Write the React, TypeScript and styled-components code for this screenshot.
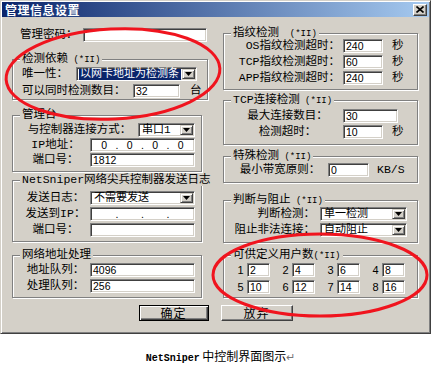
import React from "react";
import styled, { createGlobalStyle } from "styled-components";

const GlobalStyle = createGlobalStyle`
  html, body {
    margin: 0;
    padding: 0;
    background: #ffffff;
  }
  body {
    font-family: "Liberation Mono", "Noto Sans CJK SC", monospace;
    font-size: 11.5px;
    color: #000;
  }
  * {
    box-sizing: border-box;
  }
`;

const Page = styled.div`
  position: relative;
  width: 434px;
  height: 367px;
  overflow: hidden;
`;

const Window = styled.div`
  width: 431px;
  height: 334px;
  background: #d4d0c8;
  border: 1px solid;
  border-color: #d4d0c8 #404040 #404040 #d4d0c8;
  box-shadow: inset 1px 1px 0 #fff, inset -1px -1px 0 #808080;
  padding: 1px;
  display: flex;
  flex-direction: column;
`;

const TitleBar = styled.div`
  height: 15px;
  flex: none;
  display: flex;
  align-items: center;
  justify-content: space-between;
  padding: 0 2px 0 3px;
  background: linear-gradient(to right, #0a246a, #a6caf0);
`;

const TitleText = styled.span`
  color: #fff;
  font-family: "Noto Sans CJK SC", sans-serif;
  font-weight: 700;
  font-size: 12px;
  letter-spacing: 0.5px;
  line-height: 15px;
`;

const CloseBtn = styled.div`
  width: 14px;
  height: 12px;
  background: #d4d0c8;
  border: 1px solid;
  border-color: #fff #404040 #404040 #fff;
  box-shadow: inset -1px -1px 0 #808080;
  display: flex;
  align-items: center;
  justify-content: center;
`;

const Body = styled.div`
  display: flex;
  gap: 15px;
  padding-left: 10px;
`;

const Column = styled.div<{ $w: number }>`
  width: ${(p) => p.$w}px;
  display: flex;
  flex-direction: column;
  align-items: flex-start;
`;

const Group = styled.div<{ $mt: number; $w: number; $pl: number; $pb: number }>`
  width: ${(p) => p.$w}px;
  margin-top: ${(p) => p.$mt}px;
  border: 1px solid #808080;
  box-shadow: inset 1px 1px 0 #fff, 1px 1px 0 #fff;
  padding: 0 0 ${(p) => p.$pb}px ${(p) => p.$pl}px;
  display: flex;
  flex-direction: column;
  align-items: flex-start;
`;

const Caption = styled.div<{ $ml: number }>`
  margin: -7px 0 0 ${(p) => p.$ml}px;
  padding: 0 2px;
  height: 12px;
  line-height: 12px;
  background: #d4d0c8;
  white-space: pre;
`;

const Tag = styled.span`
  font-size: 9px;
`;

const Row = styled.div<{ $mt?: number; $pl?: number }>`
  display: flex;
  align-items: center;
  height: 14px;
  line-height: 14px;
  margin-top: ${(p) => p.$mt ?? 0}px;
  padding-left: ${(p) => p.$pl ?? 0}px;
  white-space: nowrap;
`;

const Label = styled.span<{ $w: number; $align?: string; $pr?: number; $pl?: number }>`
  flex: none;
  width: ${(p) => p.$w}px;
  text-align: ${(p) => p.$align ?? "center"};
  padding-right: ${(p) => p.$pr ?? 0}px;
  padding-left: ${(p) => p.$pl ?? 0}px;
  white-space: pre;
`;

const Unit = styled.span<{ $ml: number }>`
  margin-left: ${(p) => p.$ml}px;
`;

const Field = styled.div<{ $w: number }>`
  flex: none;
  width: ${(p) => p.$w}px;
  height: 14px;
  background: #fff;
  border: 1px solid;
  border-color: #808080 #fff #fff #808080;
  box-shadow: inset 1px 1px 0 #404040, inset -1px -1px 0 #d4d0c8;
  padding: 0 2px 0 2px;
  font-family: "Liberation Sans", Arial, sans-serif;
  font-size: 10.5px;
  line-height: 12px;
  overflow: hidden;
  white-space: nowrap;
`;

const IpField = styled(Field)`
  display: flex;
  padding: 0 2px;
`;

const IpSeg = styled.span`
  flex: 1;
  text-align: center;
`;

const IpDot = styled.span`
  flex: none;
  width: 3px;
  text-align: center;
`;

const SelectBox = styled(Field)`
  display: flex;
  align-items: center;
  padding: 0 1px 0 2px;
  overflow: visible;
  font-family: "Liberation Mono", "Noto Sans CJK SC", monospace;
  font-size: 11px;
`;

const SelectText = styled.span<{ $sel?: boolean }>`
  flex: 1;
  min-width: 0;
  overflow-x: clip;
  overflow-y: visible;
  white-space: nowrap;
  line-height: 11px;
  padding-left: 1px;
  background: ${(p) => (p.$sel ? "#0a246a" : "transparent")};
  color: ${(p) => (p.$sel ? "#fff" : "#000")};
`;

const DropBtn = styled.span`
  flex: none;
  width: 13px;
  height: 10px;
  margin-left: 1px;
  background: #d4d0c8;
  border: 1px solid;
  border-color: #d4d0c8 #404040 #404040 #d4d0c8;
  box-shadow: inset 1px 1px 0 #fff, inset -1px -1px 0 #808080;
  display: flex;
  align-items: center;
  justify-content: center;
`;

const Cell = styled.div`
  display: flex;
  align-items: center;
  margin-right: 9px;
`;

const Num = styled.span`
  width: 13px;
  text-align: center;
  font-family: "Liberation Sans", Arial, sans-serif;
  font-size: 11px;
`;

const Footer = styled.div`
  display: flex;
  justify-content: center;
  gap: 12px;
  margin-top: 7px;
`;

const Btn = styled.div<{ $w: number; $def?: boolean }>`
  width: ${(p) => p.$w}px;
  height: 16px;
  background: #d4d0c8;
  border: 1px solid;
  border-color: ${(p) => (p.$def ? "#000" : "#fff #404040 #404040 #fff")};
  box-shadow: ${(p) =>
    p.$def
      ? "inset 1px 1px 0 #fff, inset -1px -1px 0 #404040, inset -2px -2px 0 #808080"
      : "inset -1px -1px 0 #808080"};
  font-family: "Noto Sans CJK SC", sans-serif;
  font-size: 12px;
  letter-spacing: 1px;
  line-height: 14px;
  text-align: center;
`;

const Note = styled.div`
  margin-top: 15px;
  padding-left: 7px;
  text-align: center;
  line-height: 14px;
  font-family: "Noto Sans CJK SC", sans-serif;
  font-size: 12px;
  color: #000;
`;

const NoteStrong = styled.span`
  font-family: "Liberation Mono", monospace;
  font-weight: 700;
  font-size: 10px;
`;

const Return = styled.span`
  color: #777;
  font-size: 11px;
`;

const Overlay = styled.svg`
  position: absolute;
  top: 0;
  left: 0;
  pointer-events: none;
`;

const DropArrow = () => (
  <DropBtn>
    <svg width="7" height="4" viewBox="0 0 7 4">
      <path d="M0 0h7L3.5 4z" fill="#000" />
    </svg>
  </DropBtn>
);

const Select = ({ w, value, selected }: { w: number; value: string; selected?: boolean }) => (
  <SelectBox $w={w}>
    <SelectText $sel={selected}>{value}</SelectText>
    <DropArrow />
  </SelectBox>
);

const Ip = ({ w, parts }: { w: number; parts: string[] }) => (
  <IpField $w={w}>
    <IpSeg>{parts[0]}</IpSeg>
    <IpDot>.</IpDot>
    <IpSeg>{parts[1]}</IpSeg>
    <IpDot>.</IpDot>
    <IpSeg>{parts[2]}</IpSeg>
    <IpDot>.</IpDot>
    <IpSeg>{parts[3]}</IpSeg>
  </IpField>
);

const users = [
  ["1", "2"],
  ["2", "4"],
  ["3", "6"],
  ["4", "8"],
  ["5", "10"],
  ["6", "12"],
  ["7", "14"],
  ["8", "16"],
];

export default function App() {
  return (
    <Page>
      <GlobalStyle />
      <Window>
        <TitleBar>
          <TitleText>管理信息设置</TitleText>
          <CloseBtn>
            <svg width="8" height="7" viewBox="0 0 8 7">
              <path d="M0.5 0.5L7.5 6.5M7.5 0.5L0.5 6.5" stroke="#000" strokeWidth="1.6" />
            </svg>
          </CloseBtn>
        </TitleBar>

        <Body>
          <Column $w={196}>
            <Row $mt={11} $pl={8}>
              <Label $w={63} $align="left">管理密码：</Label>
              <Field $w={124} />
            </Row>

            <Group $mt={17} $w={196} $pl={8} $pb={1}>
              <Caption $ml={-1}>
                检测依赖<Tag> (*II)</Tag>
              </Caption>
              <Row $mt={2}>
                <Label $w={55} $align="left" $pl={1}>唯一性：</Label>
                <Select w={121} value="以网卡地址为检测条" selected />
              </Row>
              <Row $mt={3}>
                <Label $w={112} $align="left" $pl={1}>可以同时检测数目：</Label>
                <Field $w={47}>32</Field>
                <Unit $ml={10}>台</Unit>
              </Row>
            </Group>

            <Group $mt={15} $w={190} $pl={8} $pb={4}>
              <Caption $ml={-1}>管理台</Caption>
              <Row $mt={2}>
                <Label $w={117}>与控制器连接方式：</Label>
                <Select w={57} value="串口1" />
              </Row>
              <Row $mt={1}>
                <Label $w={69}>IP地址：</Label>
                <Ip w={105} parts={["0", "0", "0", "0"]} />
              </Row>
              <Row $mt={1}>
                <Label $w={69}>端口号：</Label>
                <Field $w={105}>1812</Field>
              </Row>
            </Group>

            <Group $mt={8} $w={190} $pl={8} $pb={4}>
              <Caption $ml={-1}>NetSniper网络尖兵控制器发送日志</Caption>
              <Row $mt={5}>
                <Label $w={69}>发送日志：</Label>
                <Select w={105} value="不需要发送" />
              </Row>
              <Row $mt={2}>
                <Label $w={69}>发送到IP：</Label>
                <Ip w={105} parts={["", "", "", ""]} />
              </Row>
              <Row $mt={2}>
                <Label $w={69}>端口号：</Label>
                <Field $w={105} />
              </Row>
            </Group>

            <Group $mt={13} $w={190} $pl={8} $pb={4}>
              <Caption $ml={-1}>网络地址处理</Caption>
              <Row $mt={2}>
                <Label $w={69}>地址队列：</Label>
                <Field $w={105}>4096</Field>
              </Row>
              <Row $mt={2}>
                <Label $w={69}>处理队列：</Label>
                <Field $w={105}>256</Field>
              </Row>
            </Group>
          </Column>

          <Column $w={195}>
            <Group $mt={16} $w={195} $pl={8} $pb={4}>
              <Caption $ml={-1}>
                指纹检测<Tag>  (*II)</Tag>
              </Caption>
              <Row>
                <Label $w={111} $align="right" $pr={3}>OS指纹检测超时：</Label>
                <Field $w={40}>240</Field>
                <Unit $ml={9}>秒</Unit>
              </Row>
              <Row $mt={2}>
                <Label $w={111} $align="right" $pr={3}>TCP指纹检测超时：</Label>
                <Field $w={40}>60</Field>
                <Unit $ml={9}>秒</Unit>
              </Row>
              <Row $mt={2}>
                <Label $w={111} $align="right" $pr={3}>APP指纹检测超时：</Label>
                <Field $w={40}>240</Field>
                <Unit $ml={9}>秒</Unit>
              </Row>
            </Group>

            <Group $mt={10} $w={195} $pl={8} $pb={5}>
              <Caption $ml={-1}>
                TCP连接检测<Tag> (*II)</Tag>
              </Caption>
              <Row $mt={3}>
                <Label $w={111}>最大连接数目：</Label>
                <Field $w={55}>30</Field>
              </Row>
              <Row $mt={2}>
                <Label $w={111}>检测超时：</Label>
                <Field $w={40}>10</Field>
                <Unit $ml={9}>秒</Unit>
              </Row>
            </Group>

            <Group $mt={11} $w={195} $pl={8} $pb={5}>
              <Caption $ml={-1}>
                特殊检测<Tag> (*II)</Tag>
              </Caption>
              <Row $mt={1}>
                <Label $w={96}>最小带宽原则：</Label>
                <Field $w={41}>0</Field>
                <Unit $ml={8}>KB/S</Unit>
              </Row>
            </Group>

            <Group $mt={17} $w={195} $pl={8} $pb={5}>
              <Caption $ml={-1}>
                判断与阻止<Tag> (*II)</Tag>
              </Caption>
              <Row $mt={1}>
                <Label $w={88} $align="right" $pr={5}>判断检测：</Label>
                <Select w={87} value="单一检测" />
              </Row>
              <Row $mt={2}>
                <Label $w={88} $align="right" $pr={5}>阻止非法连接：</Label>
                <Select w={87} value="自动阻止" />
              </Row>
            </Group>

            <Group $mt={12} $w={195} $pl={10} $pb={3}>
              <Caption $ml={-3}>
                可供定义用户数<Tag>(*II)</Tag>
              </Caption>
              <Row $mt={2}>
                {users.slice(0, 4).map(([n, v]) => (
                  <Cell key={n}>
                    <Num>{n}</Num>
                    <Field $w={23}>{v}</Field>
                  </Cell>
                ))}
              </Row>
              <Row $mt={3}>
                {users.slice(4).map(([n, v]) => (
                  <Cell key={n}>
                    <Num>{n}</Num>
                    <Field $w={23}>{v}</Field>
                  </Cell>
                ))}
              </Row>
            </Group>
          </Column>
        </Body>

        <Footer>
          <Btn $w={70} $def>确定</Btn>
          <Btn $w={72}>放弃</Btn>
        </Footer>
      </Window>

      <Note>
        <NoteStrong>NetSniper</NoteStrong> 中控制界面图示<Return>↵</Return>
      </Note>

      <Overlay width="434" height="367" viewBox="0 0 434 367">
        <ellipse
          cx="113"
          cy="74"
          rx="107"
          ry="45"
          transform="rotate(-3 113 74)"
          fill="none"
          stroke="#f0141e"
          strokeWidth="3"
        />
        <ellipse
          cx="320"
          cy="275"
          rx="107"
          ry="41"
          fill="none"
          stroke="#f0141e"
          strokeWidth="3"
        />
      </Overlay>
    </Page>
  );
}
